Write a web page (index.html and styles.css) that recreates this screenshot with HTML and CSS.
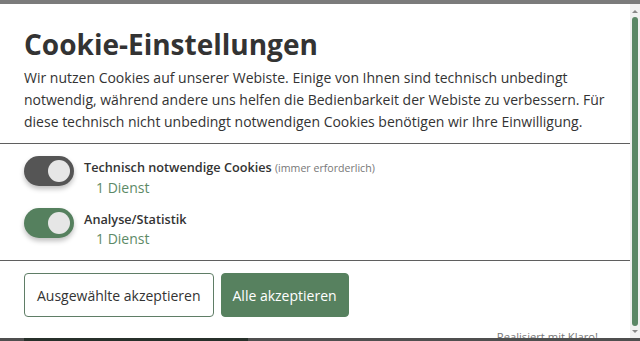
FILE: index.html
```html
<!DOCTYPE html>
<html lang="de">
<head>
<meta charset="utf-8">
<title>Cookie-Einstellungen</title>
<link rel="stylesheet" href="styles.css">
</head>
<body>
<div class="overlay-top"></div>
<div class="modal">
  <div class="modal-content">
    <div class="header">
      <h1 class="title">Cookie-Einstellungen</h1>
      <p class="intro">Wir nutzen Cookies auf unserer Webiste. Einige von Ihnen sind technisch unbedingt notwendig, während andere uns helfen die Bedienbarkeit der Webiste zu verbessern. Für diese technisch nicht unbedingt notwendigen Cookies benötigen wir Ihre Einwilligung.</p>
    </div>
    <div class="purposes">
      <div class="purpose">
        <span class="switch switch-required"><span class="knob"></span></span>
        <div class="purpose-text">
          <div class="purpose-title">Technisch notwendige Cookies <span class="required">(immer erforderlich)</span></div>
          <div class="services">1 Dienst</div>
        </div>
      </div>
      <div class="purpose">
        <span class="switch switch-on"><span class="knob"></span></span>
        <div class="purpose-text">
          <div class="purpose-title">Analyse/Statistik</div>
          <div class="services">1 Dienst</div>
        </div>
      </div>
    </div>
    <div class="footer">
      <div class="buttons">
        <button class="btn btn-outline">Ausgewählte akzeptieren</button>
        <button class="btn btn-primary">Alle akzeptieren</button>
      </div>
      <div class="powered">Realisiert mit Klaro!</div>
    </div>
  </div>
  <div class="scrollbar">
    <span class="arrow arrow-up"></span>
    <span class="thumb"></span>
    <span class="arrow arrow-down"></span>
  </div>
</div>
<div class="overlay-bottom"><div class="page-box"></div></div>
</body>
</html>
```
FILE: styles.css
```css
html, body {
  margin: 0;
  padding: 0;
}
body {
  width: 640px;
  height: 341px;
  overflow: hidden;
  background: #4f4f4f;
  font-family: "Open Sans", "Liberation Sans", sans-serif;
  color: #333;
}
.overlay-top {
  height: 4px;
  background: #7b7b7b;
}
.modal {
  height: 334px;
  display: flex;
  background: #fff;
}
.modal-content {
  width: 630px;
  overflow: hidden;
}
.header {
  padding: 0 24px;
  border-bottom: 1px solid #5f5f5f;
  height: 139px;
}
.title {
  margin: 0;
  padding-top: 21px;
  font-size: 28px;
  line-height: 38px;
  font-weight: 700;
  color: #333;
}
.intro {
  margin: 4px 0 0;
  font-size: 14px;
  line-height: 22px;
  color: #333;
}
.purposes {
  padding: 12px 24px 0;
  height: 104px;
  border-bottom: 1px solid #5f5f5f;
}
.purpose {
  display: flex;
  align-items: flex-start;
  margin-bottom: 10px;
}
.switch {
  position: relative;
  width: 50px;
  height: 30px;
  border-radius: 15px;
  flex: none;
  margin-right: 10px;
  box-shadow: 0 3px 5px rgba(0,0,0,0.25);
}
.switch-required { background: #555; }
.switch-on { background: #55805e; }
.knob {
  position: absolute;
  right: 4px;
  top: 4px;
  width: 22px;
  height: 22px;
  border-radius: 50%;
  background: #e6e6e6;
}
.purpose-text {
  padding-top: 1px;
}
.purpose-title {
  font-size: 12.7px;
  line-height: 20px;
  font-weight: 600;
  color: #333;
}
.required {
  font-size: 10.6px;
  font-weight: 400;
  color: #777;
}
.services {
  padding-left: 12px;
  font-size: 14px;
  line-height: 20px;
  color: #5d8a67;
}
.footer {
  padding: 12px 24px 0;
}
.buttons {
  display: flex;
  gap: 7px;
}
.btn {
  font-family: "Open Sans", "Liberation Sans", sans-serif;
  font-size: 14px;
  height: 44px;
  padding: 0 12px;
  border-radius: 4px;
  cursor: pointer;
}
.btn-outline {
  background: #fff;
  color: #333;
  border: 1px solid #5f7d66;
}
.btn-primary {
  background: #57815f;
  color: #fff;
  border: 1px solid #57815f;
  padding: 0 11px;
}
.powered {
  text-align: right;
  padding-right: 8px;
  margin-top: 12px;
  font-size: 11.2px;
  color: #777;
}
.scrollbar {
  width: 10px;
  background: #f1f1f1;
  display: flex;
  flex-direction: column;
  align-items: center;
}
.arrow {
  width: 0;
  height: 0;
  border-left: 3px solid transparent;
  border-right: 3px solid transparent;
  margin: 6px 0 4px;
}
.arrow-up { border-bottom: 3px solid #888; }
.arrow-down { border-top: 3px solid #888; margin: 4px 0 5px; }
.thumb {
  flex: 1;
  width: 6px;
  border-radius: 3px;
  background: #5b8766;
}
.overlay-bottom {
  height: 3px;
  padding-left: 24px;
}
.page-box {
  width: 224px;
  height: 3px;
  background: #27302a;
}
```
